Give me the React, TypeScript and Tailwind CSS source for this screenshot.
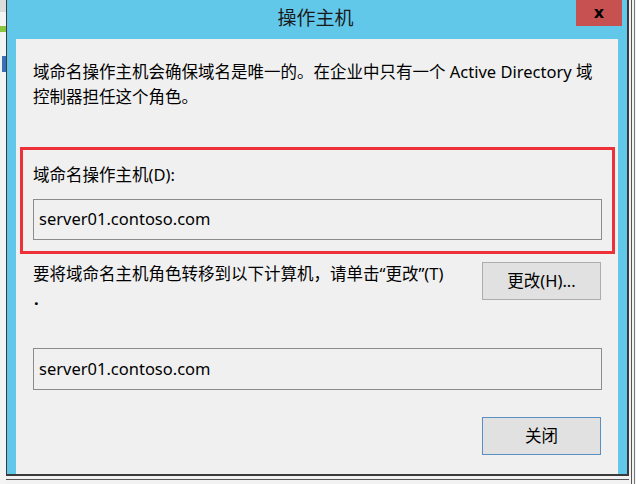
const font = { fontFamily: '"Noto Sans", "Noto Sans CJK SC", sans-serif' };

const App = () => {
  return (
    <div className="w-[636px] h-[484px] flex bg-[#f2f2f2] overflow-hidden text-black" style={font}>
      {/* background window sliver on the left */}
      <div className="w-[6px] flex flex-col bg-[#f4f4f4]">
        <div className="h-[12px] bg-[#dcdcdc]" />
        <div className="h-[14px]" />
        <div className="h-[6px] bg-[#8cc63f]" />
        <div className="h-[24px]" />
        <div className="h-[16px] bg-[#3b6fb6] w-[4px] ml-[2px]" />
      </div>

      <div className="flex flex-col">
        {/* dialog window */}
        <div className="w-[623px] h-[476px] flex flex-col bg-[#62c8ea] border-l border-r-2 border-b-2 border-[#3a3a3a]">
          {/* title bar */}
          <div className="h-[39px] flex items-start">
            <div className="flex-1 h-[36px] flex items-center justify-center pl-[48px] text-[19px] text-[#1a1a1a]">
              操作主机
            </div>
            <div className="w-[46px] h-[26px] bg-[#c75050] flex items-center justify-center mr-[5px]">
              <span className="text-[16px] font-bold leading-none text-black" style={{ fontFamily: '"DejaVu Sans", sans-serif' }}>
                x
              </span>
            </div>
          </div>

          {/* content */}
          <div className="flex-1 mx-[9px] bg-[#f0f0f0] flex flex-col text-[16.5px]">
            <p className="mt-[20px] px-[17px] leading-[25px]">
              域命名操作主机会确保域名是唯一的。在企业中只有一个 Active Directory 域
              <br />
              控制器担任这个角色。
            </p>

            <div className="mt-[38px] ml-[4px] mr-[3px] border-[3px] border-[#ec3238] pt-[13px] px-[10px] pb-[11px]">
              <div className="leading-[24px]">域命名操作主机(D):</div>
              <div className="mt-[12px] h-[41px] border border-[#8c8c8c] flex items-center px-[5px]">
                server01.contoso.com
              </div>
            </div>

            <div className="mt-[7px] pl-[17px] pr-[17px] flex justify-between items-start h-[50px]">
              <div className="leading-[25px]">
                要将域命名主机角色转移到以下计算机，请单击“更改”(T)
                <br />
                <span className="font-bold pl-[1px]">.</span>
              </div>
              <button className="mt-[1px] w-[119px] h-[38px] bg-[#e1e1e1] border border-[#adadad]">
                更改(H)...
              </button>
            </div>

            <div className="mt-[37px] ml-[17px] mr-[16px] h-[42px] border border-[#8c8c8c] flex items-center px-[5px]">
              server01.contoso.com
            </div>

            <div className="mt-[27px] pr-[17px] flex justify-end">
              <button className="w-[119px] h-[38px] bg-[#e1e1e1] border border-[#5a8fc4]">
                关闭
              </button>
            </div>
          </div>
        </div>
        <div className="mt-[3px] h-[1px] w-[623px] bg-[#555]" />
      </div>

      {/* background sliver on the right */}
      <div className="flex-1 flex">
        <div className="w-[2px]" />
        <div className="w-[1px] bg-[#555]" />
        <div className="w-[2px]" />
        <div className="w-[1px] bg-[#777]" />
      </div>
    </div>
  );
};

export default App;
